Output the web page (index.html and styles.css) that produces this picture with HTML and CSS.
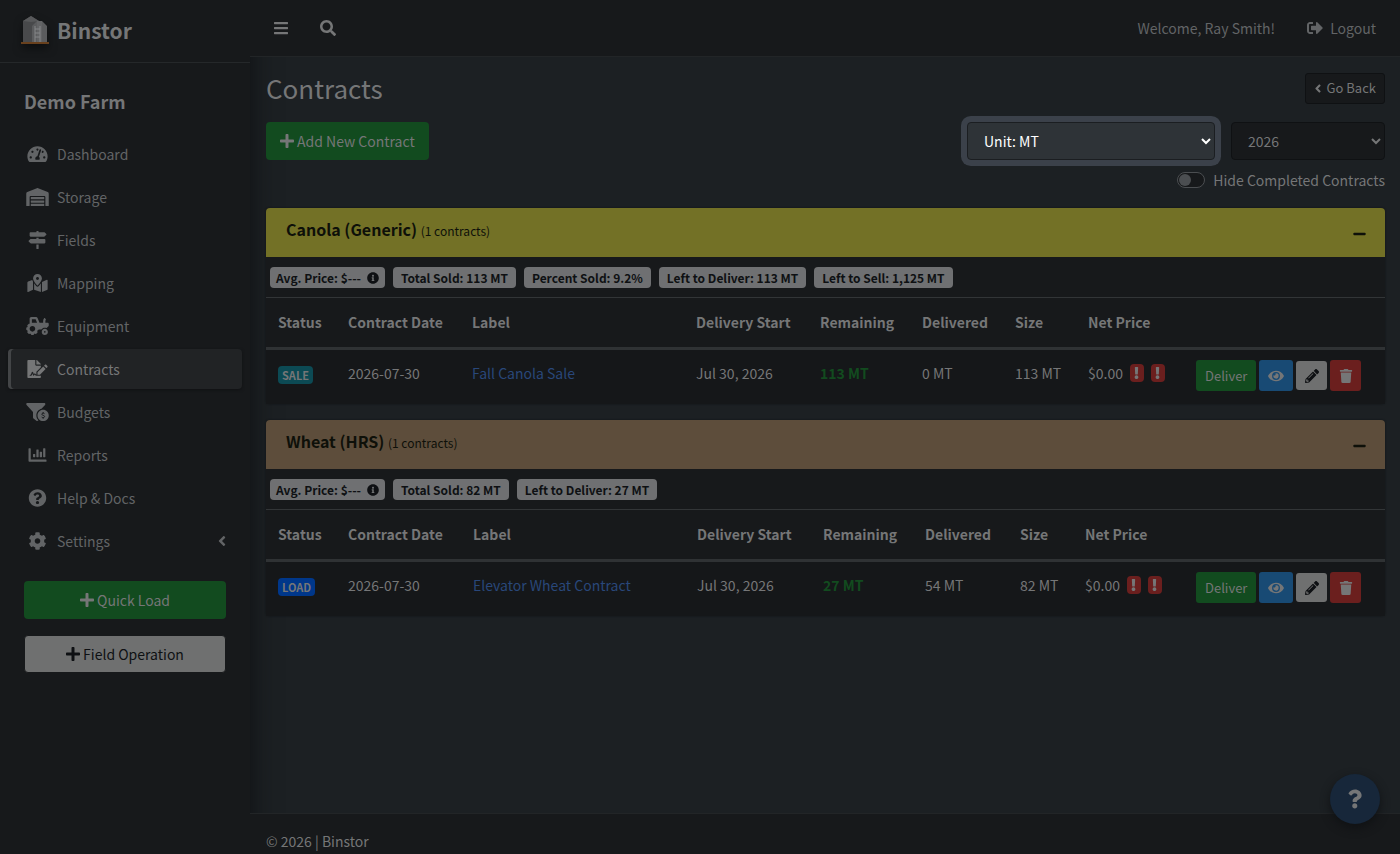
FILE: index.html
```html
<!DOCTYPE html>
<html lang="en">
<head>
<meta charset="utf-8">
<meta name="viewport" content="width=device-width, initial-scale=1">
<title>Contracts | Binstor</title>
<link rel="stylesheet" href="styles.css">
</head>
<body>
<svg class="sprite" aria-hidden="true">
  <symbol id="bars" viewBox="0 0 448 512"><path d="M16 132h416c8.8 0 16-7.2 16-16V76c0-8.8-7.2-16-16-16H16C7.2 60 0 67.2 0 76v40c0 8.8 7.2 16 16 16zm0 160h416c8.8 0 16-7.2 16-16v-40c0-8.8-7.2-16-16-16H16c-8.8 0-16 7.2-16 16v40c0 8.8 7.2 16 16 16zm0 160h416c8.8 0 16-7.2 16-16v-40c0-8.8-7.2-16-16-16H16c-8.8 0-16 7.2-16 16v40c0 8.8 7.2 16 16 16z"/></symbol>
  <symbol id="search" viewBox="0 0 512 512"><path d="M505 442.7L405.3 343c-4.5-4.5-10.6-7-17-7H372c27.6-35.3 44-79.7 44-128C416 93.1 322.9 0 208 0S0 93.1 0 208s93.1 208 208 208c48.3 0 92.7-16.4 128-44v16.3c0 6.4 2.5 12.5 7 17l99.7 99.7c9.4 9.4 24.6 9.4 33.9 0l28.3-28.3c9.4-9.4 9.4-24.6.1-34zM208 336c-70.7 0-128-57.2-128-128 0-70.7 57.2-128 128-128 70.7 0 128 57.2 128 128 0 70.7-57.2 128-128 128z"/></symbol>
  <symbol id="signout" viewBox="0 0 512 512"><path d="M497 273L329 441c-15 15-41 4.5-41-17v-96H152c-13.3 0-24-10.7-24-24v-96c0-13.3 10.7-24 24-24h136V88c0-21.4 25.9-32 41-17l168 168c9.3 9.4 9.3 24.6 0 34zM192 436v-40c0-6.6-5.4-12-12-12H96c-17.7 0-32-14.3-32-32V160c0-17.7 14.3-32 32-32h84c6.6 0 12-5.4 12-12V76c0-6.6-5.4-12-12-12H96c-53 0-96 43-96 96v192c0 53 43 96 96 96h84c6.6 0 12-5.4 12-12z"/></symbol>
  <symbol id="angle" viewBox="0 0 256 512"><path d="M31.7 239l136-136c9.4-9.4 24.6-9.4 33.9 0l22.6 22.6c9.4 9.4 9.4 24.6 0 33.9L127.9 256l96.4 96.4c9.4 9.4 9.4 24.6 0 33.9L201.7 409c-9.4 9.4-24.6 9.4-33.9 0l-136-136c-9.5-9.4-9.5-24.6-.1-34z"/></symbol>
  <symbol id="plus" viewBox="0 0 448 512"><path d="M416 208H272V64c0-17.67-14.33-32-32-32h-32c-17.67 0-32 14.33-32 32v144H32c-17.67 0-32 14.33-32 32v32c0 17.67 14.33 32 32 32h144v144c0 17.67 14.33 32 32 32h32c17.67 0 32-14.33 32-32V304h144c17.67 0 32-14.33 32-32v-32c0-17.67-14.33-32-32-32z"/></symbol>
  <symbol id="minus" viewBox="0 0 448 512"><path d="M416 208H32c-17.67 0-32 14.33-32 32v32c0 17.67 14.33 32 32 32h384c17.67 0 32-14.33 32-32v-32c0-17.67-14.33-32-32-32z"/></symbol>
  <symbol id="gauge" viewBox="0 0 576 512"><path d="M288 32C128.94 32 0 160.94 0 320c0 52.8 14.25 102.26 39.06 144.8 5.61 9.62 16.3 15.2 27.44 15.2h443c11.14 0 21.83-5.58 27.44-15.2C561.75 422.26 576 372.8 576 320c0-159.06-128.94-288-288-288zm0 64c14.71 0 26.58 10.13 30.32 23.65-1.11 2.26-2.64 4.23-3.45 6.67l-9.22 27.67c-5.13 3.49-10.97 6.01-17.64 6.01-17.67 0-32-14.33-32-32S270.33 96 288 96zM96 384c-17.67 0-32-14.33-32-32s14.33-32 32-32 32 14.33 32 32-14.33 32-32 32zm48-160c-17.67 0-32-14.33-32-32s14.33-32 32-32 32 14.33 32 32-14.33 32-32 32zm246.77-72.41l-61.33 184C343.13 347.33 352 364.54 352 384c0 11.72-3.38 22.55-8.88 32H232.88c-5.5-9.45-8.88-20.28-8.88-32 0-33.94 26.5-61.43 59.9-63.59l61.34-184.01c4.17-12.56 17.73-19.45 30.36-15.17 12.57 4.19 19.35 17.79 15.17 30.36zm14.66 57.2l15.52-46.55c3.47-1.29 7.13-2.23 11.05-2.23 17.67 0 32 14.33 32 32s-14.33 32-32 32c-11.38-.01-20.89-6.28-26.57-15.22zM480 384c-17.67 0-32-14.33-32-32s14.33-32 32-32 32 14.33 32 32-14.33 32-32 32z"/></symbol>
  <symbol id="warehouse" viewBox="0 0 640 512"><path d="M504 352H136.4c-4.4 0-8 3.6-8 8l-.1 48c0 4.4 3.6 8 8 8H504c4.4 0 8-3.6 8-8v-48c0-4.4-3.6-8-8-8zm0 96H136.1c-4.4 0-8 3.6-8 8l-.1 48c0 4.4 3.6 8 8 8h368c4.4 0 8-3.6 8-8v-48c0-4.4-3.6-8-8-8zm0-192H136.6c-4.4 0-8 3.6-8 8l-.1 48c0 4.4 3.6 8 8 8H504c4.4 0 8-3.6 8-8v-48c0-4.4-3.6-8-8-8zm106.5-139L338.4 3.7a48.15 48.15 0 0 0-36.9 0L29.5 117C11.7 124.5 0 141.9 0 161.3V504c0 4.4 3.6 8 8 8h80c4.4 0 8-3.6 8-8V256c0-17.6 14.6-32 32.6-32h382.8c18 0 32.6 14.4 32.6 32v248c0 4.4 3.6 8 8 8h80c4.4 0 8-3.6 8-8V161.3c0-19.4-11.7-36.8-29.5-44.3z"/></symbol>
  <symbol id="signs" viewBox="0 0 512 512"><path d="M507.31 84.69L464 41.37c-6-6-14.14-9.37-22.63-9.37H288V16c0-8.84-7.16-16-16-16h-32c-8.84 0-16 7.16-16 16v16H56c-13.25 0-24 10.75-24 24v80c0 13.25 10.75 24 24 24h385.37c8.49 0 16.62-3.37 22.63-9.37l43.31-43.31c6.25-6.26 6.25-16.38 0-22.63zM224 496c0 8.84 7.16 16 16 16h32c8.84 0 16-7.16 16-16V384h-64v112zm232-272H288v-32h-64v32H70.63c-8.49 0-16.62 3.37-22.63 9.37L4.69 276.69c-6.25 6.25-6.25 16.38 0 22.63L48 342.63c6 6 14.14 9.37 22.63 9.37H456c13.25 0 24-10.75 24-24v-80c0-13.25-10.75-24-24-24z"/></symbol>
  <symbol id="map" viewBox="0 0 576 512"><path d="M288 0c-69.59 0-126 56.41-126 126 0 56.26 82.35 158.8 113.9 196.02 6.39 7.54 17.82 7.54 24.2 0C331.65 284.8 414 182.26 414 126 414 56.41 357.59 0 288 0zm0 168c-23.2 0-42-18.8-42-42s18.8-42 42-42 42 18.8 42 42-18.8 42-42 42zM20.12 215.95A32.006 32.006 0 0 0 0 245.66v250.32c0 11.32 11.43 19.06 21.94 14.86L160 448V214.92c-8.84-15.98-16.07-31.54-21.25-46.42L20.12 215.95zM288 359.67c-14.07 0-27.38-6.18-36.51-16.96-19.66-23.2-40.57-49.62-59.49-76.72v182l192 64V266c-18.92 27.09-39.82 53.52-59.49 76.72-9.13 10.77-22.44 16.95-36.51 16.95zm266.06-198.51L416 224v288l139.88-55.95A31.996 31.996 0 0 0 576 426.34V176.02c0-11.32-11.43-19.06-21.94-14.86z"/></symbol>
  <symbol id="tractor" viewBox="0 0 640 512"><path d="M528 336c-48.6 0-88 39.4-88 88s39.4 88 88 88 88-39.4 88-88-39.4-88-88-88zm0 112c-13.2 0-24-10.8-24-24s10.8-24 24-24 24 10.8 24 24-10.8 24-24 24zm80-288h-64v-40.2c0-14.12 4.7-27.76 13.15-38.84 4.42-5.8 3.55-14.06-1.32-19.49L534.2 37.3c-6.66-7.45-18.32-6.92-24.7.78C490.58 60.9 480 89.81 480 119.8V160H377.67L321.58 29.14A47.914 47.914 0 0 0 277.45 0H144c-26.47 0-48 21.53-48 48v146.52c-8.63-6.73-20.96-6.46-28.89 1.47L36 227.1c-8.59 8.59-8.59 22.52 0 31.11l5.06 5.06c-4.99 9.26-8.96 18.82-11.91 28.72H22c-12.15 0-22 9.85-22 22v44c0 12.15 9.85 22 22 22h7.14c2.96 9.91 6.92 19.46 11.91 28.73l-5.06 5.06c-8.59 8.59-8.59 22.52 0 31.11L67.1 476c8.59 8.59 22.52 8.59 31.11 0l5.06-5.06c9.26 4.99 18.82 8.96 28.72 11.91V490c0 12.15 9.85 22 22 22h44c12.15 0 22-9.85 22-22v-7.14c9.9-2.95 19.46-6.92 28.72-11.91l5.06 5.06c8.59 8.59 22.52 8.59 31.11 0l31.11-31.11c8.59-8.59 8.59-22.52 0-31.11l-5.06-5.06c4.99-9.26 8.96-18.82 11.91-28.72H330c12.15 0 22-9.85 22-22v-6h80.54c21.91-28.99 56.32-48 95.46-48 18.64 0 36.07 4.61 51.8 12.2l50.82-50.82c6-6 9.37-14.14 9.37-22.63V192c.01-17.67-14.32-32-31.99-32zM176 416c-44.18 0-80-35.82-80-80s35.82-80 80-80 80 35.82 80 80-35.82 80-80 80zm22-256h-38V64h106.89l41.15 96H198z"/></symbol>
  <symbol id="sign" viewBox="0 0 576 512"><path d="M218.17 424.14c-2.95-5.92-8.09-6.52-10.17-6.52s-7.22.59-10.02 6.19l-7.67 15.34c-6.37 12.78-25.03 11.37-29.48-2.09L144 386.59l-10.61 31.88c-5.89 17.66-22.38 29.53-41 29.53H80c-8.84 0-16-7.16-16-16s7.16-16 16-16h12.39c4.83 0 9.11-3.08 10.64-7.66l18.19-54.64c3.3-9.81 12.44-16.41 22.78-16.41s19.48 6.59 22.77 16.41l13.88 41.64c19.75-16.19 54.06-9.7 66 14.16 1.89 3.78 5.49 5.95 9.36 6.26v-82.12l128-127.09V160H248c-13.2 0-24-10.8-24-24V0H24C10.7 0 0 10.7 0 24v464c0 13.3 10.7 24 24 24h336c13.3 0 24-10.7 24-24v-40l-128-.11c-16.12-.31-30.58-9.28-37.83-23.75zM384 121.9c0-6.3-2.5-12.4-7-16.9L279.1 7c-4.5-4.5-10.6-7-17-7H256v128h128v-6.1zm-96 225.06V416h68.99l161.68-162.78-67.88-67.88L288 346.96zm280.54-179.63l-31.87-31.87c-9.94-9.94-26.07-9.94-36.01 0l-27.25 27.25 67.88 67.88 27.25-27.25c9.95-9.94 9.95-26.07 0-36.01z"/></symbol>
  <symbol id="funnel" viewBox="0 0 640 512"><path d="M433.46 165.94l101.2-111.87C554.61 34.12 540.48 0 512.26 0H31.74C3.52 0-10.61 34.12 9.34 54.07L192 256v155.92c0 12.59 5.93 24.44 16 32l79.99 60c20.86 15.64 48.47 6.97 59.22-13.57C310.8 455.38 288 406.35 288 352c0-89.79 62.05-165.17 145.46-186.06zM480 192c-88.37 0-160 71.63-160 160s71.63 160 160 160 160-71.63 160-160-71.63-160-160-160z"/><path d="M520 304c-12-12-26-14-42-14-22 0-36 12-36 28 0 42 80 24 80 68 0 18-18 28-40 28-18 0-32-4-44-15M480 256v34M480 414v34" fill="none" stroke="#17191b" stroke-width="26"/></symbol>
  <symbol id="chart" viewBox="0 0 512 512"><path d="M332.8 320h38.4c6.4 0 12.8-6.4 12.8-12.8V172.8c0-6.4-6.4-12.8-12.8-12.8h-38.4c-6.4 0-12.8 6.4-12.8 12.8v134.4c0 6.4 6.4 12.8 12.8 12.8zm96 0h38.4c6.4 0 12.8-6.4 12.8-12.8V76.8c0-6.4-6.4-12.8-12.8-12.8h-38.4c-6.4 0-12.8 6.4-12.8 12.8v230.4c0 6.4 6.4 12.8 12.8 12.8zm-288 0h38.4c6.4 0 12.8-6.4 12.8-12.8v-70.4c0-6.4-6.4-12.8-12.8-12.8h-38.4c-6.4 0-12.8 6.4-12.8 12.8v70.4c0 6.4 6.4 12.8 12.8 12.8zm96 0h38.4c6.4 0 12.8-6.4 12.8-12.8V108.8c0-6.4-6.4-12.8-12.8-12.8h-38.4c-6.4 0-12.8 6.4-12.8 12.8v198.4c0 6.4 6.4 12.8 12.8 12.8zM496 384H64V80c0-8.84-7.16-16-16-16H16C7.16 64 0 71.16 0 80v336c0 17.67 14.33 32 32 32h464c8.84 0 16-7.16 16-16v-32c0-8.84-7.16-16-16-16z"/></symbol>
  <symbol id="help" viewBox="0 0 512 512"><path d="M504 256c0 136.997-111.043 248-248 248S8 392.997 8 256C8 119.083 119.043 8 256 8s248 111.083 248 248zM262.655 90c-54.497 0-89.255 22.957-116.549 63.758-3.536 5.286-2.353 12.415 2.715 16.258l34.699 26.31c5.205 3.947 12.621 3.008 16.665-2.122 17.864-22.658 30.113-35.797 57.303-35.797 20.429 0 45.698 13.148 45.698 32.958 0 14.976-12.363 22.667-32.534 33.976C247.128 238.528 216 254.941 216 296v4c0 6.627 5.373 12 12 12h56c6.627 0 12-5.373 12-12v-1.333c0-28.462 83.186-29.647 83.186-106.667 0-58.002-60.165-102-116.531-102zM256 338c-25.365 0-46 20.635-46 46 0 25.364 20.635 46 46 46s46-20.636 46-46c0-25.365-20.635-46-46-46z"/></symbol>
  <symbol id="question" viewBox="130 80 260 360"><path d="M262.655 90c-54.497 0-89.255 22.957-116.549 63.758-3.536 5.286-2.353 12.415 2.715 16.258l34.699 26.31c5.205 3.947 12.621 3.008 16.665-2.122 17.864-22.658 30.113-35.797 57.303-35.797 20.429 0 45.698 13.148 45.698 32.958 0 14.976-12.363 22.667-32.534 33.976C247.128 238.528 216 254.941 216 296v4c0 6.627 5.373 12 12 12h56c6.627 0 12-5.373 12-12v-1.333c0-28.462 83.186-29.647 83.186-106.667 0-58.002-60.165-102-116.531-102zM256 338c-25.365 0-46 20.635-46 46 0 25.364 20.635 46 46 46s46-20.636 46-46c0-25.365-20.635-46-46-46z"/></symbol>
  <symbol id="cog" viewBox="0 0 512 512"><path d="M487.4 315.7l-42.6-24.6c4.3-23.2 4.3-47 0-70.2l42.6-24.6c4.9-2.8 7.1-8.6 5.5-14-11.1-35.6-30-67.8-54.7-94.6-3.8-4.1-10-5.1-14.8-2.3L380.8 110c-17.9-15.4-38.5-27.3-60.8-35.1V25.8c0-5.6-3.9-10.5-9.4-11.7-36.7-8.2-74.3-7.8-109.2 0-5.5 1.2-9.4 6.1-9.4 11.7V75c-22.2 7.9-42.8 19.8-60.8 35.1L88.7 85.5c-4.9-2.8-11-1.9-14.8 2.3-24.7 26.7-43.6 58.9-54.7 94.6-1.7 5.4.6 11.2 5.5 14L67.3 221c-4.3 23.2-4.3 47 0 70.2l-42.6 24.6c-4.9 2.8-7.1 8.6-5.5 14 11.1 35.6 30 67.8 54.7 94.6 3.8 4.1 10 5.1 14.8 2.3l42.6-24.6c17.9 15.4 38.5 27.3 60.8 35.1v49.2c0 5.6 3.9 10.5 9.4 11.7 36.7 8.2 74.3 7.8 109.2 0 5.5-1.2 9.4-6.1 9.4-11.7v-49.2c22.2-7.9 42.8-19.8 60.8-35.1l42.6 24.6c4.9 2.8 11 1.9 14.8-2.3 24.7-26.7 43.6-58.9 54.7-94.6 1.5-5.5-.7-11.3-5.6-14.1zM256 336c-44.1 0-80-35.9-80-80s35.9-80 80-80 80 35.9 80 80-35.9 80-80 80z"/></symbol>
  <symbol id="info" viewBox="0 0 512 512"><path d="M256 8C119.043 8 8 119.083 8 256c0 136.997 111.043 248 248 248s248-111.003 248-248C504 119.083 392.957 8 256 8zm0 110c23.196 0 42 18.804 42 42s-18.804 42-42 42-42-18.804-42-42 18.804-42 42-42zm56 254c0 6.627-5.373 12-12 12h-88c-6.627 0-12-5.373-12-12v-24c0-6.627 5.373-12 12-12h12v-64h-12c-6.627 0-12-5.373-12-12v-24c0-6.627 5.373-12 12-12h64c6.627 0 12 5.373 12 12v100h12c6.627 0 12 5.373 12 12v24z"/></symbol>
  <symbol id="eye" viewBox="0 0 576 512"><path d="M572.52 241.4C518.29 135.59 410.93 64 288 64S57.68 135.64 3.48 241.41a32.35 32.35 0 0 0 0 29.19C57.71 376.41 165.07 448 288 448s230.32-71.64 284.52-177.41a32.35 32.35 0 0 0 0-29.19zM288 400a144 144 0 1 1 144-144 143.93 143.93 0 0 1-144 144zm0-240a95.31 95.31 0 0 0-25.31 3.79 47.85 47.85 0 0 1-66.9 66.9A95.78 95.78 0 1 0 288 160z"/></symbol>
  <symbol id="pencil" viewBox="0 0 512 512"><path d="M497.9 142.1l-46.1 46.1c-4.7 4.7-12.3 4.7-17 0l-111-111c-4.7-4.7-4.7-12.3 0-17l46.1-46.1c18.7-18.7 49.1-18.7 67.9 0l60.1 60.1c18.8 18.7 18.8 49.1 0 67.9zM284.2 99.8L21.6 362.4.4 483.9c-2.9 16.4 11.4 30.6 27.8 27.8l121.5-21.3 262.6-262.6c4.7-4.7 4.7-12.3 0-17l-111-111c-4.8-4.7-12.4-4.7-17.1 0zM124.1 339.9c-5.5-5.5-5.5-14.3 0-19.8l154-154c5.5-5.5 14.3-5.5 19.8 0s5.5 14.3 0 19.8l-154 154c-5.5 5.5-14.3 5.5-19.8 0zM88 424h48v36.3l-64.5 11.3-31.1-31.1L51.7 376H88v48z"/></symbol>
  <symbol id="trash" viewBox="0 0 448 512"><path d="M432 32H312l-9.4-18.7A24 24 0 0 0 281.1 0H166.8a23.72 23.72 0 0 0-21.4 13.3L136 32H16A16 16 0 0 0 0 48v32a16 16 0 0 0 16 16h416a16 16 0 0 0 16-16V48a16 16 0 0 0-16-16zM53.2 467a48 48 0 0 0 47.9 45h245.8a48 48 0 0 0 47.9-45L416 128H32z"/></symbol>
  <symbol id="bang" viewBox="0 0 192 512"><path d="M176 432c0 44.112-35.888 80-80 80s-80-35.888-80-80 35.888-80 80-80 80 35.888 80 80zM25.26 25.199l13.6 272C39.499 309.972 50.041 320 62.83 320h66.34c12.789 0 23.331-10.028 23.97-22.801l13.6-272C167.425 11.49 156.496 0 142.77 0H49.23C35.504 0 24.575 11.49 25.26 25.199z"/></symbol>
</svg>

<div class="app">
  <aside class="sidebar">
    <a class="brand" href="#">
      <svg class="brand-logo" viewBox="0 0 28 28" aria-hidden="true">
        <path d="M2 26V5l8-5 8 5v21z" fill="#48494b"/>
        <path d="M2 5l8-5 8 5-8 1z" fill="#58595b"/>
        <path d="M11 26V10l5-5h5l5 5v16z" fill="#5b5c5e"/>
        <path d="M16 5h5v21h-5z" fill="#636466"/>
        <path d="M14 10v16M19 10v16M14 13h5M14 17h5M14 21h5" stroke="#858688" fill="none"/>
        <path d="M0 26h28v2H0z" fill="#68401d"/>
      </svg>
      <span>Binstor</span>
    </a>
    <div class="farm">Demo Farm</div>
    <nav class="nav">
      <a class="nav-link" href="#"><span class="nav-icon"><svg class="icon"><use href="#gauge"/></svg></span>Dashboard</a>
      <a class="nav-link" href="#"><span class="nav-icon"><svg class="icon"><use href="#warehouse"/></svg></span>Storage</a>
      <a class="nav-link" href="#"><span class="nav-icon"><svg class="icon"><use href="#signs"/></svg></span>Fields</a>
      <a class="nav-link" href="#"><span class="nav-icon"><svg class="icon"><use href="#map"/></svg></span>Mapping</a>
      <a class="nav-link" href="#"><span class="nav-icon"><svg class="icon"><use href="#tractor"/></svg></span>Equipment</a>
      <a class="nav-link active" href="#" aria-current="page"><span class="nav-icon"><svg class="icon"><use href="#sign"/></svg></span>Contracts</a>
      <a class="nav-link" href="#"><span class="nav-icon"><svg class="icon"><use href="#funnel"/></svg></span>Budgets</a>
      <a class="nav-link" href="#"><span class="nav-icon"><svg class="icon"><use href="#chart"/></svg></span>Reports</a>
      <a class="nav-link" href="#"><span class="nav-icon"><svg class="icon"><use href="#help"/></svg></span>Help &amp; Docs</a>
      <a class="nav-link" href="#"><span class="nav-icon"><svg class="icon"><use href="#cog"/></svg></span>Settings<svg class="icon nav-arrow"><use href="#angle"/></svg></a>
    </nav>
    <div class="side-actions">
      <button class="btn btn-green" type="button"><svg class="icon"><use href="#plus"/></svg>Quick Load</button>
      <button class="btn btn-light" type="button"><svg class="icon"><use href="#plus"/></svg>Field Operation</button>
    </div>
  </aside>

  <div class="main">
    <header class="topbar">
      <button class="top-button" type="button" aria-label="Toggle menu"><svg class="icon"><use href="#bars"/></svg></button>
      <button class="top-button" type="button" aria-label="Search"><svg class="icon"><use href="#search"/></svg></button>
      <span class="welcome">Welcome, Ray Smith!</span>
      <a class="logout" href="#"><svg class="icon"><use href="#signout"/></svg>Logout</a>
    </header>

    <main class="content">
      <div class="title-row">
        <h1>Contracts</h1>
        <a class="btn go-back" href="#"><svg class="icon"><use href="#angle"/></svg>Go Back</a>
      </div>
      <div class="tools">
        <button class="btn btn-green" type="button"><svg class="icon"><use href="#plus"/></svg>Add New Contract</button>
        <div class="filters">
          <select class="select unit" aria-label="Unit"><option>Unit: MT</option></select>
          <select class="select year" aria-label="Year"><option>2026</option></select>
        </div>
      </div>
      <div class="toggle-row">
        <input class="switch" type="checkbox" id="hide-completed">
        <label for="hide-completed">Hide Completed Contracts</label>
      </div>

      <section class="card">
        <div class="card-head canola">
          <h2>Canola (Generic) <small>(1 contracts)</small></h2>
          <button class="collapse" type="button" aria-label="Collapse Canola"><svg class="icon"><use href="#minus"/></svg></button>
        </div>
        <div class="badges">
          <span class="badge">Avg. Price: $--- <svg class="icon"><use href="#info"/></svg></span>
          <span class="badge">Total Sold: 113 MT</span>
          <span class="badge">Percent Sold: 9.2%</span>
          <span class="badge">Left to Deliver: 113 MT</span>
          <span class="badge">Left to Sell: 1,125 MT</span>
        </div>
        <table class="contracts canola-table">
          <colgroup><col class="c-status"><col class="c-date"><col><col class="c-start"><col class="c-left"><col class="c-done"><col class="c-size"><col class="c-price"><col class="c-actions"></colgroup>
          <thead><tr><th>Status</th><th>Contract Date</th><th>Label</th><th>Delivery Start</th><th>Remaining</th><th>Delivered</th><th>Size</th><th>Net Price</th><th></th></tr></thead>
          <tbody><tr>
            <td><span class="tag sale">SALE</span></td><td>2026-07-30</td><td><a href="#">Fall Canola Sale</a></td><td>Jul 30, 2026</td><td class="remaining">113 MT</td><td>0 MT</td><td>113 MT</td>
            <td><span class="price">$0.00<span class="alert"><svg class="icon"><use href="#bang"/></svg></span><span class="alert"><svg class="icon"><use href="#bang"/></svg></span></span></td>
            <td><div class="actions"><button class="act deliver" type="button">Deliver</button><button class="act view" type="button" aria-label="View"><svg class="icon"><use href="#eye"/></svg></button><button class="act edit" type="button" aria-label="Edit"><svg class="icon"><use href="#pencil"/></svg></button><button class="act delete" type="button" aria-label="Delete"><svg class="icon"><use href="#trash"/></svg></button></div></td>
          </tr></tbody>
        </table>
      </section>

      <section class="card">
        <div class="card-head wheat">
          <h2>Wheat (HRS) <small>(1 contracts)</small></h2>
          <button class="collapse" type="button" aria-label="Collapse Wheat"><svg class="icon"><use href="#minus"/></svg></button>
        </div>
        <div class="badges">
          <span class="badge">Avg. Price: $--- <svg class="icon"><use href="#info"/></svg></span>
          <span class="badge">Total Sold: 82 MT</span>
          <span class="badge">Left to Deliver: 27 MT</span>
        </div>
        <table class="contracts wheat-table">
          <colgroup><col class="c-status"><col class="c-date"><col><col class="c-start"><col class="c-left"><col class="c-done"><col class="c-size"><col class="c-price"><col class="c-actions"></colgroup>
          <thead><tr><th>Status</th><th>Contract Date</th><th>Label</th><th>Delivery Start</th><th>Remaining</th><th>Delivered</th><th>Size</th><th>Net Price</th><th></th></tr></thead>
          <tbody><tr>
            <td><span class="tag load">LOAD</span></td><td>2026-07-30</td><td><a href="#">Elevator Wheat Contract</a></td><td>Jul 30, 2026</td><td class="remaining">27 MT</td><td>54 MT</td><td>82 MT</td>
            <td><span class="price">$0.00<span class="alert"><svg class="icon"><use href="#bang"/></svg></span><span class="alert"><svg class="icon"><use href="#bang"/></svg></span></span></td>
            <td><div class="actions"><button class="act deliver" type="button">Deliver</button><button class="act view" type="button" aria-label="View"><svg class="icon"><use href="#eye"/></svg></button><button class="act edit" type="button" aria-label="Edit"><svg class="icon"><use href="#pencil"/></svg></button><button class="act delete" type="button" aria-label="Delete"><svg class="icon"><use href="#trash"/></svg></button></div></td>
          </tr></tbody>
        </table>
      </section>
    </main>
    <footer class="footer">© 2026 | Binstor</footer>
  </div>
</div>
<button class="help-bubble" type="button" aria-label="Help"><svg class="icon"><use href="#question"/></svg></button>
</body>
</html>
```
FILE: styles.css
```css
* { box-sizing: border-box; }

body {
  margin: 0;
  background: #1c2023;
  color: #757677;
  font-family: "Noto Sans CJK SC", "Noto Sans", sans-serif;
  font-size: 14px;
  line-height: 24px;
}

button, input, select { font: inherit; color: inherit; }
button { cursor: pointer; }
a { color: inherit; text-decoration: none; }

.sprite { display: none; }
.icon { width: 20px; height: 16px; fill: currentColor; flex: none; }

.app { display: flex; min-height: 100vh; }

/* Sidebar */
.sidebar {
  width: 250px;
  flex: none;
  background: #17191b;
  box-shadow: 0 8px 24px #0e1012;
}
.brand {
  display: flex;
  align-items: center;
  gap: 8px;
  height: 63px;
  padding: 0 21px 2px;
  border-bottom: 1px solid #25282a;
  font-size: 21px;
  font-weight: 700;
}
.brand-logo { width: 28px; height: 28px; filter: drop-shadow(0 4px 4px #0c0d0e); }
.farm { padding: 26px 24px 21px; font-size: 18px; font-weight: 700; line-height: 24px; }
.nav { display: flex; flex-direction: column; gap: 3px; padding: 0 8px; }
.nav-link {
  display: flex;
  align-items: center;
  height: 40px;
  padding: 0 16px;
  border-radius: 4px;
  color: #626466;
}
.nav-icon { display: flex; justify-content: center; width: 27px; margin-right: 6px; }
.nav-icon .icon { width: 23px; height: 18px; }
.nav-link.active { background: #212325; color: #757677; box-shadow: inset 3px 0 0 #434547, 0 1px 3px #101113; }
.nav-arrow { width: 8px; height: 16px; margin-left: auto; }
.side-actions { display: flex; flex-direction: column; gap: 16px; padding: 20px 24px; }

.btn {
  display: flex;
  align-items: center;
  justify-content: center;
  gap: 3px;
  height: 38px;
  padding: 0 13px;
  border: 1px solid transparent;
  border-radius: 4px;
}
.btn .icon { width: 14px; }
.btn-green { background: #124b1f; }
.btn-light { background: #6f7070; color: #0e1013; border-color: #17191b; }

/* Top bar */
.main { display: flex; flex-direction: column; flex: 1; min-width: 0; }
.topbar {
  display: flex;
  align-items: center;
  height: 57px;
  padding: 0 24px 0 23px;
  background: #17191b;
  border-bottom: 1px solid #222527;
  color: #626466;
}
.top-button { display: flex; padding: 0; border: 0; background: none; margin-right: 31px; color: #757677; }
.top-button .icon { width: 16px; }
.welcome { margin-left: auto; }
.logout { display: flex; align-items: center; gap: 7px; margin-left: 32px; }
.logout .icon { width: 16px; }

/* Content */
.content { flex: 1; padding: 15px 15px 16px 16px; }
.title-row { display: flex; align-items: center; justify-content: space-between; height: 32px; }
h1 { margin: 0; font-size: 26px; font-weight: 400; line-height: 32px; }
.go-back { height: 31px; padding: 0 8px; gap: 5px; background: #17191b; border-color: #0f1113; border-radius: 3px; font-size: 13px; }
.go-back .icon { width: 8px; height: 13px; }
.tools { display: flex; justify-content: space-between; margin-top: 18px; }
.filters { display: flex; gap: 16px; }
.select {
  height: 38px;
  padding: 0 12px;
  background: #17191b;
  border: 1px solid #0f1113;
  border-radius: 4px;
}
.unit { width: 248px; background: #2e3337; border-color: #1b1e21; color: #fff; box-shadow: 0 0 0 6px #3b414a; }
.year { width: 154px; }
.toggle-row { display: flex; align-items: center; justify-content: flex-end; gap: 8px; margin: 8px 0 16px; height: 24px; }
.switch {
  appearance: none;
  display: flex;
  align-items: center;
  width: 28px;
  height: 16px;
  margin: 0;
  padding: 0 1px;
  border: 1px solid #4b4e51;
  border-radius: 8px;
  background: #17191b;
}
.switch::before { content: ""; width: 12px; height: 12px; border-radius: 50%; background: #4b4e51; }
.switch:checked::before { margin-left: auto; }

.card { margin-bottom: 16px; border-radius: 4px; background: #17191b; box-shadow: 0 0 2px #0f1113; }
.card-head { display: flex; align-items: center; justify-content: space-between; height: 49px; padding: 0 19px 6px 20px; border-radius: 4px 4px 0 0; color: #0e1009; }
.canola { background: #737126; }
.wheat { background: #5d4d3b; }
h2 { margin: 0; font-size: 16px; font-weight: 700; line-height: 24px; }
h2 small { font-size: 12px; font-weight: 400; }
.collapse { display: flex; padding: 8px 0 0; border: 0; background: none; }
.collapse .icon { width: 13px; height: 14px; }
.badges { display: flex; flex-wrap: wrap; gap: 8px; padding: 10px 4px 9px; border-bottom: 1px solid #323537; }
.badge { display: flex; align-items: center; gap: 4px; padding: 0 8px; border-radius: 4px; background: #6f7072; color: #0e1013; font-size: 12px; font-weight: 700; line-height: 21px; }
.badge:first-child { padding: 0 6px; gap: 6px; }
.badge .icon { width: 12px; height: 12px; }

.contracts { width: 100%; border-collapse: collapse; table-layout: fixed; }
.contracts th, .contracts td { padding: 0 0 0 12px; text-align: left; white-space: nowrap; }
.contracts th { height: 50px; border-bottom: 3px solid #2f3234; font-weight: 700; }
.contracts td { height: 56px; padding-bottom: 8px; }
.contracts tbody { background: #151719; }
.contracts a { color: #29477a; }
.c-status { width: 70px; }
.c-date { width: 124px; }
.c-start { width: 124px; }
.c-left { width: 102px; }
.c-done { width: 93px; }
.c-size { width: 73px; }
.c-price { width: 108px; }
.c-actions { width: 201px; }
.wheat-table .c-date { width: 125px; }
.wheat-table .c-start { width: 126px; }
.wheat-table .c-done { width: 95px; }
.wheat-table .c-size { width: 65px; }
.wheat-table .c-price { width: 111px; }
.contracts .remaining { color: #124b1f; font-weight: 700; }

.tag { display: inline-block; padding: 0 4px; border-radius: 4px; font-size: 11px; font-weight: 700; line-height: 18px; vertical-align: middle; }
.sale { background: #0c4a54; }
.load { background: #00378a; }
.price { display: flex; align-items: center; gap: 7px; }
.alert { display: flex; align-items: center; justify-content: center; width: 14px; height: 18px; border-radius: 4px; background: #6b1f1e; }
.alert .icon { width: 5px; height: 12px; }

.actions { display: flex; align-items: center; gap: 3px; padding-top: 6px; }
.act { display: flex; align-items: center; justify-content: center; height: 31px; padding: 0 8px; border: 1px solid transparent; border-radius: 3px; font-size: 13px; }
.act .icon { width: 16px; height: 14px; }
.deliver { background: #124b1f; }
.view { background: #184a74; }
.edit { width: 31px; height: 29px; background: #6f7070; color: #0e1013; }
.delete { width: 31px; background: #6b1f1e; }

.footer { height: 41px; padding: 15px 16px 0; background: #17191b; border-top: 1px solid #222527; }

.help-bubble {
  position: fixed;
  right: 20px;
  bottom: 30px;
  display: flex;
  align-items: center;
  justify-content: center;
  width: 50px;
  height: 50px;
  padding: 0;
  border: 0;
  border-radius: 50%;
  background: #17273a;
  box-shadow: 0 4px 10px #101214;
}
.help-bubble .icon { width: 16px; height: 20px; }
```
